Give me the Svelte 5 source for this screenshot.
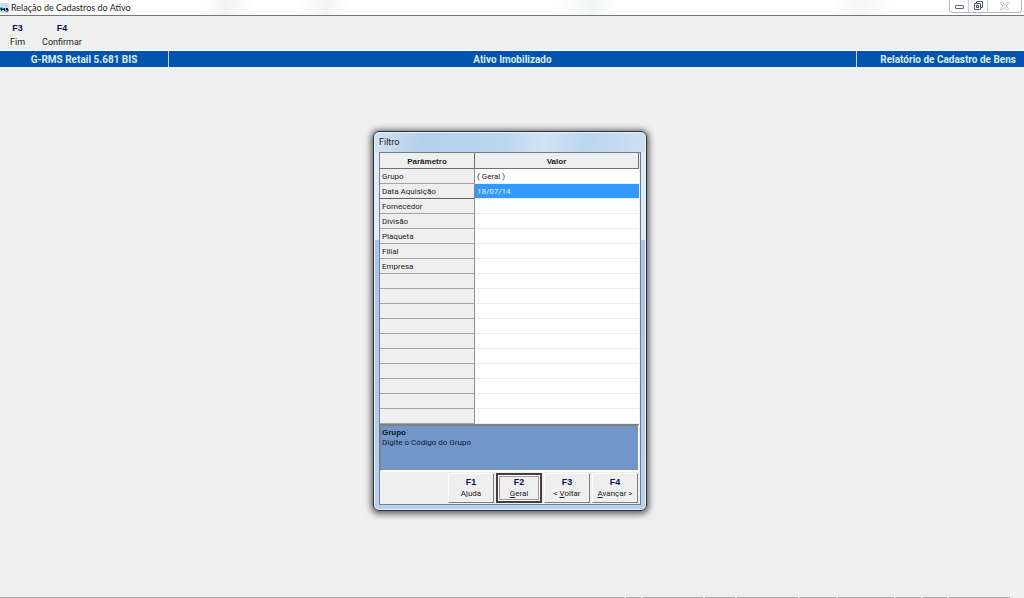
<script>
	const toolbar = [
		{ key: 'F3', label: 'Fim' },
		{ key: 'F4', label: 'Confirmar' }
	];

	const params = [
		{ name: 'Grupo', value: '( Geral )' },
		{ name: 'Data Aquisição', value: '18/07/14' },
		{ name: 'Fornecedor', value: '' },
		{ name: 'Divisão', value: '' },
		{ name: 'Plaqueta', value: '' },
		{ name: 'Filial', value: '' },
		{ name: 'Empresa', value: '' }
	];

	const TOTAL_ROWS = 17;
	const rows = Array.from({ length: TOTAL_ROWS }, (_, i) => params[i] ?? { name: '', value: '' });

	const actions = [
		{ key: 'F1', before: '', accel: '', after: 'Ajuda' },
		{ key: 'F2', before: '', accel: 'G', after: 'eral' },
		{ key: 'F3', before: '< ', accel: 'V', after: 'oltar' },
		{ key: 'F4', before: '', accel: 'A', after: 'vançar >' }
	];

	// relative widths of the status bar panels
	const panels = [624, 15, 60, 30, 61, 36, 56, 25, 24, 61];

	let selected = $state(1);
	let focused = $state('F2');
</script>

<div class="window">
	<header class="titlebar">
		<svg class="app-icon" viewBox="0 0 9 10" aria-hidden="true">
			<rect width="9" height="10" fill="#b9e6ea" />
			<path d="M4 0h5v10H4z" fill="#cdd3f0" />
			<path d="M0 5l2-1 1 3H0z" fill="#00907c" />
			<path d="M1.500 8V5l1.500 2L4.500 5v3M8 5.500H6v1h2V8H5.500" fill="none" stroke="#15203c" />
		</svg>
		<h1>Relação de Cadastros do Ativo</h1>
		<div class="window-controls">
			<button type="button" aria-label="Minimizar">
				<svg width="11" height="10" viewBox="0 0 11 10"><rect x="1.500" y="4.500" width="8" height="3" rx="0.500" fill="#fff" stroke="#606674" /></svg>
			</button>
			<button type="button" aria-label="Restaurar">
				<svg width="11" height="10" viewBox="0 0 11 10" fill="#fff" stroke="#565c6a">
					<rect x="3.500" y="0.500" width="6" height="6" rx="0.500" />
					<rect x="1.500" y="2.500" width="6" height="6" rx="0.500" />
					<rect x="3.500" y="4.500" width="2" height="2" />
				</svg>
			</button>
			<button type="button" class="close" aria-label="Fechar" disabled>
				<svg width="11" height="10" viewBox="0 0 11 10"><path d="M1.500 1.500h2l2 2 2-2h2v1L7 5l2.500 2.500v1h-2l-2-2-2 2h-2v-1L4 5 1.500 2.500z" fill="#fff" stroke="#c6c8cc" /></svg>
			</button>
		</div>
	</header>

	<nav class="toolbar">
		{#each toolbar as item}
			<button type="button">
				<b>{item.key}</b>
				<span>{item.label}</span>
			</button>
		{/each}
	</nav>

	<div class="banner">
		<span class="product">G-RMS Retail 5.681 BIS</span>
		<span class="module">Ativo Imobilizado</span>
		<span class="report">Relatório de Cadastro de Bens</span>
	</div>

	<main>
		<section class="dialog" role="dialog" aria-labelledby="dialog-title">
			<h2 id="dialog-title">Filtro</h2>
			<div class="client">
				<table>
					<thead>
						<tr><th>Parâmetro</th><th>Valor</th></tr>
					</thead>
					<tbody>
						{#each rows as row, i}
							<tr class:selected={i === selected} onclick={() => (selected = i)}>
								<td class="name">{row.name}</td>
								<td>{row.value}</td>
							</tr>
						{/each}
					</tbody>
				</table>
				<div class="hint">
					<b>Grupo</b>
					<p>Digite o Código do Grupo</p>
				</div>
				<div class="actions">
					{#each actions as a}
						<button type="button" class:focused={a.key === focused} onclick={() => (focused = a.key)}>
							<b>{a.key}</b>
							<span>{a.before}<u>{a.accel}</u>{a.after}</span>
						</button>
					{/each}
				</div>
			</div>
		</section>
	</main>

	<footer class="statusbar">
		{#each panels as size}
			<span style:flex-grow={size}></span>
		{/each}
	</footer>
</div>

<style>
	:global(body) {
		background: #efefef;
	}

	.window {
		display: flex;
		flex-direction: column;
		min-height: 100vh;
		background: #efefef;
		color: #1c1c1c;
		font-family: Roboto, 'Liberation Sans', Arial, sans-serif;
		font-size: 8px;
	}

	h1,
	h2,
	p {
		margin: 0;
		font-weight: normal;
	}

	button {
		margin: 0;
		padding: 0;
		border: 0;
		background: none;
		color: inherit;
		font: inherit;
	}

	.titlebar {
		display: flex;
		align-items: center;
		height: 15px;
		border-bottom: 1px solid #77777a;
		background:
			linear-gradient(100deg, transparent 20%, #f3f3f3 22%, transparent 25%, transparent 29%, #f4f4f4 32%, transparent 34%, transparent 54%, #f3f5f5 58%, transparent 60%, transparent 81%, #f6f6f6 84%, transparent 87%),
			#fff;
	}

	.app-icon {
		width: 9px;
		height: 10px;
		margin-right: 2px;
	}

	h1 {
		flex: 1;
		font-family: Lato, sans-serif;
		font-size: 9px;
		line-height: 15px;
	}

	.window-controls {
		display: flex;
		align-self: flex-start;
		height: 12px;
		margin-right: 2px;
		border: 1px solid #b4bac0;
		border-top: 0;
		border-radius: 0 0 4px 4px;
	}

	.window-controls button {
		display: flex;
		align-items: center;
		justify-content: center;
		width: 19px;
		border-right: 1px solid #cdd1d5;
	}

	.window-controls .close {
		width: 33px;
		border-right: 0;
	}

	.toolbar {
		display: flex;
		gap: 17px;
		height: 34px;
		padding-left: 10px;
		border-bottom: 1px solid #fff;
	}

	.toolbar button {
		display: flex;
		flex-direction: column;
		align-items: center;
		gap: 2px;
		padding-top: 6px;
		font-size: 9px;
		line-height: 12px;
	}

	.toolbar b,
	.actions b {
		color: #0b0b6c;
		font-family: 'Liberation Sans', Arial, sans-serif;
		font-size: 9px;
	}

	.banner {
		display: flex;
		border-bottom: 1px solid #e4fafa;
		background: #0054b0;
		color: #dcecff;
		font-size: 10px;
		font-weight: bold;
		line-height: 14px;
		text-align: center;
	}

	.banner span {
		padding-top: 2px;
	}

	.product {
		width: 168px;
	}

	.module {
		flex: 1;
		border: solid #c4dcf4;
		border-width: 0 1px;
	}

	.banner .report {
		width: 167px;
		padding-right: 8px;
		box-sizing: border-box;
		text-align: right;
	}

	main {
		display: flex;
		flex: 1;
		align-items: flex-start;
		justify-content: center;
		padding: 63px 4px 63px 0;
	}

	.dialog {
		width: 262px;
		padding: 0 5px 5px;
		border: 1px solid #28323e;
		border-radius: 6px;
		background:
			linear-gradient(100deg, #d5e3f3 0, #b4cfea 18%, #bcd6f0 48%, #d3e3f5 62%, #bcd5ef 78%, #cfe0f3 100%) 0 0 / 100% 20px no-repeat,
			linear-gradient(#e2ebf5 0, #e2ebf5 108px, #a9c3ea 108px, #b9d2ee 100%);
		box-shadow:
			inset 0 0 0 1px #e6f2fc,
			0 1px 6px 2px #00000099;
	}

	h2 {
		font-size: 9px;
		line-height: 20px;
	}

	.client {
		padding-right: 1px;
		border: 1px solid #6e7f90;
		background: #efefef;
	}

	table {
		width: 100%;
		border-collapse: separate;
		border-spacing: 0;
		table-layout: fixed;
		background: #fff;
	}

	th {
		box-sizing: border-box;
		height: 16px;
		padding: 2px 0 0;
		border: solid #707070;
		border-width: 0 1px 1px 0;
		background: #efefef;
		font-family: 'Liberation Sans', Arial, sans-serif;
		font-size: 8px;
		line-height: 13px;
	}

	th:first-child {
		width: 95px;
	}

	td {
		box-sizing: border-box;
		height: 15px;
		padding: 2px 2px 0;
		border-bottom: 1px solid #ededed;
		line-height: 12px;
		white-space: nowrap;
	}

	.name {
		border-right: 1px solid #8c8c8c;
		border-bottom-color: #a4a4a4;
		background: #efefef;
	}

	.selected td:last-child {
		background: #3399ff;
		color: #e6f2ff;
	}

	.selected .name {
		border-bottom-color: #606060;
	}

	.hint {
		box-sizing: border-box;
		height: 47px;
		padding: 2px 1px;
		border: solid #fff;
		border-width: 2px 1px 1px;
		border-top-color: #808080;
		border-left-color: #808080;
		background: #7396c8;
		color: #0c1830;
		line-height: 10px;
	}

	.hint b {
		display: block;
		font-family: 'Liberation Sans', Arial, sans-serif;
	}

	.actions {
		display: flex;
		justify-content: flex-end;
		gap: 2px;
		padding: 1px 1px 1px 0;
		border-top: 1px solid #fff;
	}

	.actions button {
		display: flex;
		flex-direction: column;
		align-items: center;
		justify-content: center;
		box-sizing: border-box;
		width: 46px;
		height: 30px;
		border: 1px solid #fff;
		border-right-color: #808080;
		border-bottom-color: #808080;
		line-height: 12px;
	}

	.actions .focused {
		border: 2px solid #463c40;
		box-shadow:
			inset 0 0 0 1px #fff,
			inset 0 0 0 2px #9a9a9a;
	}

	.statusbar {
		display: flex;
		gap: 2px;
		height: 1px;
		padding-right: 14px;
	}

	.statusbar span {
		flex-basis: 0;
		background: #a8a8a8;
	}
</style>
